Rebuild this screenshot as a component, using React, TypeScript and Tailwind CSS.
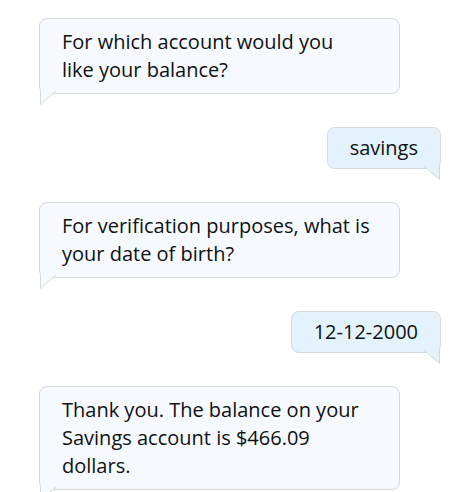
import * as React from "react"

type Msg = { from: "bot" | "user"; text: string }

const messages: Msg[] = [
    { from: "bot", text: "For which account would you like your balance?" },
    { from: "user", text: "savings" },
    { from: "bot", text: "For verification purposes, what is your date of birth?" },
    { from: "user", text: "12-12-2000" },
    { from: "bot", text: "Thank you. The balance on your Savings account is $466.09 dollars." },
]

function Tail({ side }: { side: "bot" | "user" }) {
    const fill = side === "bot" ? "#f6faff" : "#e3f2fd"
    if (side === "bot") {
        return (
            <svg width="18" height="15" viewBox="0 0 18 15" className="absolute -bottom-[13px] left-0">
                <polygon points="0.5,0 0.5,13.5 16,0" fill={fill} />
                <polyline points="0.5,0 0.5,13.5 16,0" fill="none" stroke="#d5d9d9" strokeWidth="1" />
            </svg>
        )
    }
    return (
        <svg width="18" height="15" viewBox="0 0 18 15" className="absolute -bottom-[13px] right-0">
            <polygon points="17.5,0 17.5,13.5 2,0" fill={fill} />
            <polyline points="17.5,0 17.5,13.5 2,0" fill="none" stroke="#d5d9d9" strokeWidth="1" />
        </svg>
    )
}

export default function App() {
    return (
        <div className="w-[469px] h-[492px] overflow-hidden bg-white pt-[18px] font-['Open_Sans',sans-serif] text-[#0f1111]">
            <div className="flex flex-col gap-[33px]">
                {messages.map((m, i) =>
                    m.from === "bot" ? (
                        <div key={i} className="flex justify-start pl-[39px]">
                            <div className="relative w-[361px] rounded-[8px] border border-[#d5d9d9] bg-[#f6faff] pl-[22px] pr-[29px] py-[9px] text-[20px] leading-[28px]">
                                {m.text}
                                <Tail side="bot" />
                            </div>
                        </div>
                    ) : (
                        <div key={i} className="flex justify-end pr-[28px]">
                            <div className="relative rounded-[8px] border border-[#d5d9d9] bg-[#e3f2fd] px-[22px] py-[6px] text-[20px] leading-[28px]">
                                {m.text}
                                <Tail side="user" />
                            </div>
                        </div>
                    )
                )}
            </div>
        </div>
    )
}
